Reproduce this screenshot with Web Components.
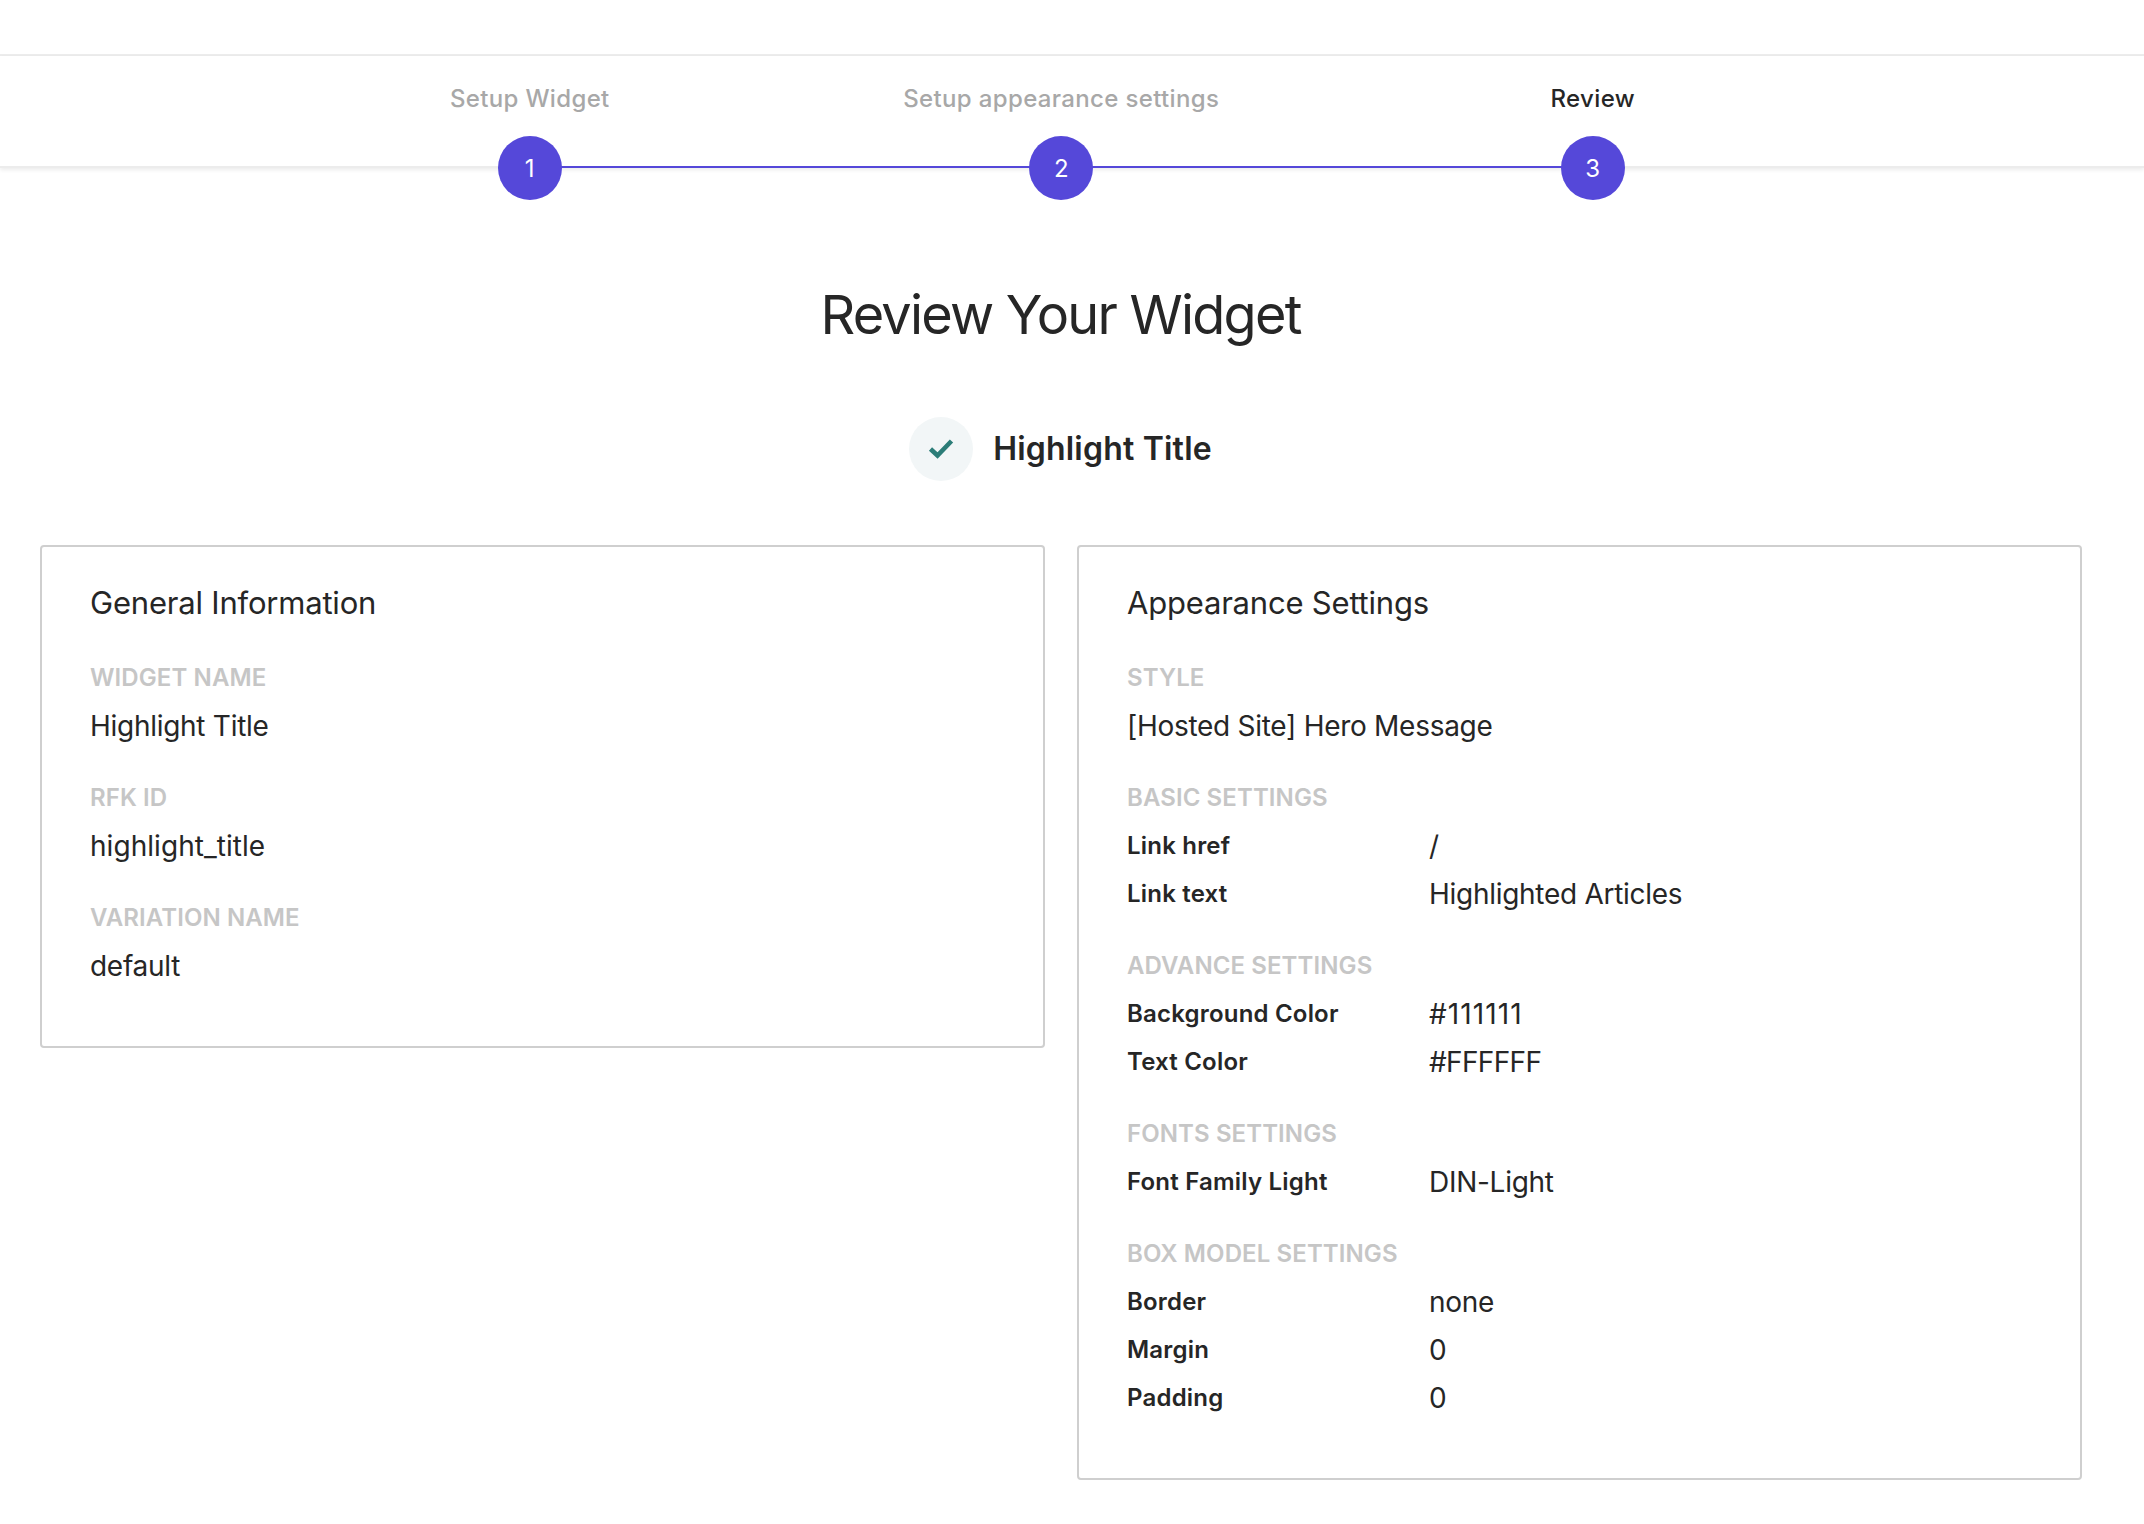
<!DOCTYPE html>
<html>
<head>
<meta charset="utf-8">
<title>Review Your Widget</title>
<style>
html, body { margin: 0; background: #fff; }
body { font-family: Inter, "Liberation Sans", sans-serif; color: #262626; }
</style>
</head>
<body>
<top-bar></top-bar>
<step-bar>
    <step-item num="1">Setup Widget</step-item>
    <step-item num="2">Setup appearance settings</step-item>
    <step-item num="3" current>Review</step-item>
</step-bar>
<review-head name="Highlight Title">Review Your Widget</review-head>
<card-grid>
    <info-card heading="General Information">
        <info-field label="Widget name">Highlight Title</info-field>
        <info-field label="RFK ID"><span style="letter-spacing:0.05px">highlight_title</span></info-field>
        <info-field label="Variation name">default</info-field>
    </info-card>
    <info-card heading="Appearance Settings">
        <info-field label="Style">[Hosted Site] Hero Message</info-field>
        <info-field label="Basic settings">
            <info-row key="Link href">/</info-row>
            <info-row key="Link text">Highlighted Articles</info-row>
        </info-field>
        <info-field label="Advance settings">
            <info-row key="Background Color"><span style="letter-spacing:1.1px">#111111</span></info-row>
            <info-row key="Text Color"><span style="letter-spacing:-0.65px">#FFFFFF</span></info-row>
        </info-field>
        <info-field label="Fonts settings">
            <info-row key="Font Family Light">DIN-Light</info-row>
        </info-field>
        <info-field label="Box model settings">
            <info-row key="Border">none</info-row>
            <info-row key="Margin">0</info-row>
            <info-row key="Padding">0</info-row>
        </info-field>
    </info-card>
</card-grid>

<script>
// small helper, every element just stamps its html in an open shadow root
class Base extends HTMLElement {
    render(html) {
        if (!this.shadowRoot) this.attachShadow({ mode: 'open' });
        this.shadowRoot.innerHTML = html;
    }
}

class TopBar extends Base {
    connectedCallback() {
        this.render(`<style>
            :host { display: block; height: 54px; border-bottom: 2px solid #ececec; }
        </style>`);
    }
}

class StepBar extends Base {
    connectedCallback() {
        this.render(`<style>
            :host {
                display: block;
                height: 110px;
                box-shadow: 0 2px 4px 0 rgba(0, 0, 0, 0.08);
                border-bottom: 2px solid #ececec;
            }
            .steps {
                position: relative;
                display: grid;
                grid-template-columns: repeat(3, 531.5px);
                width: 1594.5px;
                margin-left: 264px;
            }
            .line {
                position: absolute;
                left: 266px;
                right: 266px;
                top: 110px;
                height: 2px;
                background: #5548d9;
            }
        </style>
        <div class="steps"><div class="line"></div><slot></slot></div>`);
    }
}

class StepItem extends Base {
    connectedCallback() {
        const current = this.hasAttribute('current');
        this.render(`<style>
            :host {
                display: flex;
                flex-direction: column;
                align-items: center;
                position: relative;
                padding-top: 29px;
            }
            .label {
                font-size: 24px;
                line-height: 28px;
                font-weight: 500;
                letter-spacing: 0.35px;
                color: ${current ? '#262626' : '#a8a8a8'};
            }
            .dot {
                margin-top: 23px;
                width: 64px;
                height: 64px;
                border-radius: 50%;
                background: #5548d9;
                color: #fff;
                font-size: 24px;
                display: flex;
                align-items: center;
                justify-content: center;
            }
        </style>
        <div class="label"><slot></slot></div>
        <div class="dot">${this.getAttribute('num')}</div>`);
    }
}

class ReviewHead extends Base {
    connectedCallback() {
        this.render(`<style>
            :host { display: block; text-align: center; margin-right: 23px; }
            h1 {
                margin: 0;
                padding-top: 113px;
                font-size: 54px;
                line-height: 68px;
                font-weight: 400;
                letter-spacing: -1.75px;
                color: #262626;
            }
            .name {
                display: flex;
                align-items: center;
                justify-content: center;
                gap: 20px;
                margin-top: 68px;
            }
            .check {
                width: 64px;
                height: 64px;
                border-radius: 50%;
                background: #f2f6f7;
                display: flex;
                align-items: center;
                justify-content: center;
            }
            .title { font-size: 32px; line-height: 64px; font-weight: 600; letter-spacing: 0.2px; }
        </style>
        <h1><slot></slot></h1>
        <div class="name">
            <div class="check">
                <svg width="26" height="22" viewBox="0 0 26 22"><path d="M2.5 11 L9.5 17.5 L23.5 3" fill="none" stroke="#2c7d78" stroke-width="4.6"/></svg>
            </div>
            <div class="title">${this.getAttribute('name')}</div>
        </div>`);
    }
}

class CardGrid extends Base {
    connectedCallback() {
        this.render(`<style>
            :host {
                display: grid;
                grid-template-columns: 1005px 1005px;
                gap: 32px;
                align-items: start;
                padding: 64px 0 46px 40px;
            }
        </style><slot></slot>`);
    }
}

class InfoCard extends Base {
    connectedCallback() {
        this.render(`<style>
            :host {
                display: block;
                border: 2px solid #cfcfcf;
                border-radius: 4px;
                padding: 36px 48px 32px;
                box-sizing: border-box;
            }
            h2 { margin: 0 0 31px; font-size: 31px; line-height: 40px; font-weight: 400; letter-spacing: -0.2px; color: #262626; }
        </style>
        <h2>${this.getAttribute('heading')}</h2>
        <slot></slot>`);
    }
}

class InfoField extends Base {
    connectedCallback() {
        this.render(`<style>
            :host { display: block; margin-bottom: 24px; }
            .label {
                font-size: 24px;
                line-height: 48px;
                font-weight: 600;
                letter-spacing: 0.1px;
                text-transform: uppercase;
                color: #c6c6c6;
            }
            .value { font-size: 28px; line-height: 48px; letter-spacing: -0.28px; color: #262626; }
        </style>
        <div class="label">${this.getAttribute('label')}</div>
        <div class="value"><slot></slot></div>`);
    }
}

class InfoRow extends Base {
    connectedCallback() {
        this.render(`<style>
            :host { display: grid; grid-template-columns: 302px 1fr; }
            .key { font-size: 24px; line-height: 48px; font-weight: 600; letter-spacing: 0.2px; }
            .val { font-size: 28px; line-height: 48px; }
        </style>
        <div class="key">${this.getAttribute('key')}</div>
        <div class="val"><slot></slot></div>`);
    }
}

customElements.define('top-bar', TopBar);
customElements.define('step-bar', StepBar);
customElements.define('step-item', StepItem);
customElements.define('review-head', ReviewHead);
customElements.define('card-grid', CardGrid);
customElements.define('info-card', InfoCard);
customElements.define('info-field', InfoField);
customElements.define('info-row', InfoRow);
</script>
</body>
</html>
